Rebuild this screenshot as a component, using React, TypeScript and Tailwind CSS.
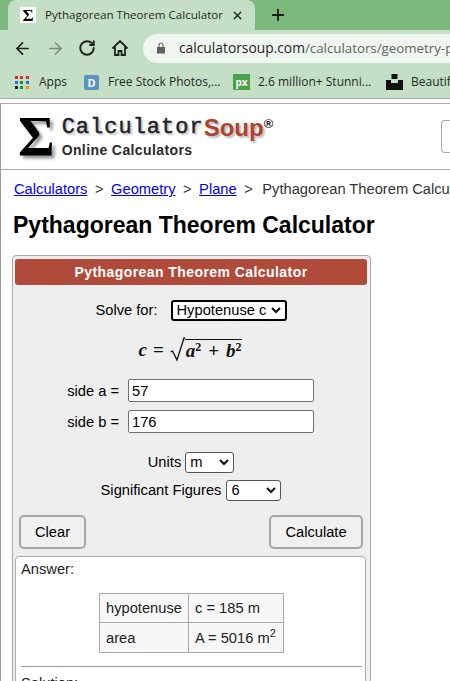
import { ArrowLeft, ArrowRight, Plus, RotateCw, X } from "lucide-react";

const sans = "font-['Liberation_Sans',Arial,sans-serif]";
const uiFont = "font-['Open_Sans','Noto_Sans',sans-serif]";

const appDots = [
  "bg-[#d93025]", "bg-[#d93025]", "bg-[#d93025]",
  "bg-[#1a73e8]", "bg-[#1e8e3e]", "bg-[#1a73e8]",
  "bg-[#202124]", "bg-[#1e8e3e]", "bg-[#f29900]",
];

function Bookmark({ icon, label, className }: { icon: React.ReactNode; label: string; className: string }) {
  return (
    <div className={`flex shrink-0 items-center ${className}`}>
      {icon}
      <span className="whitespace-nowrap text-[12px] text-[#1c2a1f]">{label}</span>
    </div>
  );
}

function BrowserChrome() {
  return (
    <div className={`${uiFont} shrink-0`}>
      <div className="flex h-[30px] items-end bg-[#7ab87c]">
        <div className="ml-[8px] flex h-[30px] w-[247px] items-center rounded-t-[8px] bg-[#c5dfc6] pl-[12px]">
          <div className="flex h-[16px] w-[16px] items-center justify-center bg-white font-['Liberation_Serif',serif] text-[17px] font-bold leading-none text-black">Σ</div>
          <span className="ml-[9px] whitespace-nowrap text-[11.6px] text-[#1f2a21]">Pythagorean Theorem Calculator</span>
          <X className="ml-[8px] shrink-0 text-[#1f2a21]" size={13} strokeWidth={2.5} />
        </div>
        <Plus className="mb-[6px] ml-[14px] text-[#1a1a1a]" size={18} strokeWidth={2.4} />
      </div>
      <div className="flex h-[36px] items-center bg-[#c5dfc6] pl-[13px]">
        <ArrowLeft className="shrink-0 text-[#1f2321]" size={19} strokeWidth={2.2} />
        <ArrowRight className="ml-[14px] shrink-0 text-[#7f8a80]" size={19} strokeWidth={2} />
        <RotateCw className="ml-[13px] shrink-0 text-[#1f2321]" size={18} strokeWidth={2.6} />
        <svg className="ml-[15px] shrink-0" width="18" height="18" viewBox="0 0 18 18" fill="none" stroke="#1f2321" strokeWidth="1.8">
          <path d="M1.5 9.5 9 2l7.5 7.5M4 8v8h3.5v-4h3v4H14V8" />
        </svg>
        <div className="ml-[14px] flex h-[29px] min-w-0 flex-1 items-center overflow-hidden rounded-l-full bg-[#eff6ef] pl-[13px]">
          <svg className="shrink-0" width="10" height="12" viewBox="0 0 10 12" fill="#5a625b">
            <path d="M1 5h8v6.5H1zM2.5 5V3a2.5 2.5 0 0 1 5 0v2H6.4V3a1.4 1.4 0 0 0-2.8 0v2z" />
          </svg>
          <span className="ml-[13px] whitespace-nowrap text-[13.8px] text-[#1f2321]">calculatorsoup.com<span className="text-[13.3px] text-[#5c665e]">/calculators/geometry-p</span></span>
        </div>
      </div>
      <div className="flex h-[32px] items-center overflow-hidden bg-[#c5dfc6] pl-[15px]">
        <Bookmark
          className="w-[69px]"
          icon={
            <div className="mr-[10px] grid w-[14px] grid-cols-3 gap-[2px]">
              {appDots.map((dot, i) => (
                <span key={i} className={`h-[3px] w-[3px] ${dot}`} />
              ))}
            </div>
          }
          label="Apps"
        />
        <Bookmark
          className="w-[149px]"
          icon={<div className="mr-[9px] flex h-[15px] w-[15px] items-center justify-center rounded-[2px] bg-[#5a93bd] text-[11px] font-bold leading-none text-white">D</div>}
          label="Free Stock Photos,..."
        />
        <Bookmark
          className="w-[153px]"
          icon={<div className="mr-[8px] flex h-[16px] w-[17px] items-center justify-center bg-[#4aa34a] text-[10px] font-bold leading-none text-white">px</div>}
          label="2.6 million+ Stunni..."
        />
        <Bookmark
          className=""
          icon={
            <svg className="mr-[8px]" width="17" height="16" viewBox="0 0 17 16" fill="#111">
              <path d="M5.5 0h6v5h-6zM0 6h5v3h7V6h5v10H0z" />
            </svg>
          }
          label="Beautiful"
        />
      </div>
      <div className="h-[5px] border-t border-[#a9b3aa] bg-white" />
    </div>
  );
}

function SiteHeader() {
  return (
    <div className="flex h-[67px] shrink-0 items-center border-y border-[#a8a8a8] bg-white pl-[17px]">
      <div className="font-['Liberation_Serif',serif] text-[56px] font-bold leading-none text-black [text-shadow:3px_3px_3px_#999]">Σ</div>
      <div className="ml-[7px]">
        <div className="flex items-start leading-none">
          <span className="font-['Liberation_Mono',monospace] text-[22px] tracking-[1px] text-[#222] [-webkit-text-stroke:0.5px_#222] [text-shadow:2px_2px_2px_#bbb]">Calculator</span>
          <span className={`${sans} -mt-[1px] text-[24px] font-bold text-[#b0432f] [text-shadow:2px_2px_2px_#bbb]`}>Soup</span>
          <span className={`${sans} text-[13px] font-bold text-[#222]`}>®</span>
        </div>
        <div className={`${sans} mt-[3px] text-[14px] font-bold leading-none tracking-[0.4px] text-[#2a2a2a]`}>Online Calculators</div>
      </div>
      <div className="ml-auto h-[33px] w-[9px] rounded-l-[4px] border-y border-l border-[#aaa]" />
    </div>
  );
}

function Breadcrumbs() {
  const links = ["Calculators", "Geometry", "Plane"];
  return (
    <div className="mt-[11px] flex whitespace-nowrap pl-[13px] text-[14.7px] leading-[16px] text-[#333]">
      {links.map((link) => (
        <span key={link} className="flex">
          <a href="#" className="text-[#0000ee] underline">{link}</a>
          <span className="mx-[7.5px]">&gt;</span>
        </span>
      ))}
      <span className="ml-[2px]">Pythagorean Theorem Calculator</span>
    </div>
  );
}

function NativeSelect({ value, className }: { value: string; className: string }) {
  return (
    <div className={`flex items-center justify-between rounded-[3px] border border-[#555] bg-white pl-[4px] pr-[4px] text-[14.7px] leading-none text-black ${className}`}>
      <span>{value}</span>
      <svg width="10" height="7" viewBox="0 0 10 7" fill="none" stroke="#111" strokeWidth="2">
        <path d="M1 1l4 4 4-4" />
      </svg>
    </div>
  );
}

function SideInput({ label, value }: { label: string; value: string }) {
  return (
    <div className="flex items-center">
      <span className="w-[113px] pr-[9px] text-right text-[14.7px] text-black">{label}</span>
      <div className="flex h-[23px] w-[186px] items-center rounded-[2px] border border-[#707070] bg-white pl-[3px] text-[14.7px] text-black">{value}</div>
    </div>
  );
}

function Formula() {
  return (
    <div className="mt-[15px] flex h-[26px] items-center justify-center pr-[2px] font-['Liberation_Serif',serif] text-[19px] font-bold leading-none text-[#111]">
      <i>c</i>
      <span className="mx-[6px]">=</span>
      <svg className="shrink-0" width="15" height="25" viewBox="0 0 15 25" fill="none" stroke="#111">
        <path d="M0.5 15l2-1 4.5 9L14 1h1" strokeWidth="1.3" />
      </svg>
      <span className="border-t border-[#111] pl-[1px] pt-[1px]">
        <i>a</i><sup className="text-[12px]">2</sup>
        <span className="mx-[7px]">+</span>
        <i>b</i><sup className="text-[12px]">2</sup>
      </span>
    </div>
  );
}

function AnswerBox() {
  const cell = "border border-[#a8a8a8] px-[6px] text-left align-middle";
  return (
    <div className="mr-[1px] mt-[7px] h-[140px] rounded-[4px] border border-[#aaa] bg-white pl-[5px] pr-[3px] pt-[4px] text-[14.7px] leading-[16px] text-[#222]">
      <div>Answer:</div>
      <table className="mx-auto mt-[16px] border-collapse bg-[#f7f7f7]">
        <tbody>
          <tr className="h-[29px]">
            <td className={cell}>hypotenuse</td>
            <td className={`${cell} w-[95px]`}>c = 185 m</td>
          </tr>
          <tr className="h-[30px]">
            <td className={cell}>area</td>
            <td className={cell}>A = 5016 m<sup className="text-[11px]">2</sup></td>
          </tr>
        </tbody>
      </table>
      <div className="mt-[13px] border-t border-[#999]" />
      <div className="mt-[8px]">Solution:</div>
    </div>
  );
}

function CalculatorCard() {
  return (
    <div className="ml-[11px] mt-[16px] w-[359px] rounded-t-[4px] border border-[#a8a8a8] bg-[#eeeeee] pl-[2px] pr-[3px] pt-[3px]">
      <div className="flex h-[26px] items-center justify-center rounded-[3px] bg-[#b04a3a] text-[14px] font-bold tracking-[0.43px] text-white">Pythagorean Theorem Calculator</div>
      <div className="mt-[14px] flex items-center justify-center text-[14.7px] text-black">
        <span>Solve for:</span>
        <NativeSelect value="Hypotenuse c" className="ml-[13px] h-[21px] w-[116px] border-2 border-black" />
      </div>
      <Formula />
      <div className="mt-[17px] flex flex-col gap-[8px]">
        <SideInput label="side a =" value="57" />
        <SideInput label="side b =" value="176" />
      </div>
      <div className="mt-[18px] flex items-center justify-center text-[14.7px] text-black">
        <span className="mr-[4px]">Units</span>
        <NativeSelect value="m" className="h-[21px] w-[49px]" />
      </div>
      <div className="mt-[6px] flex items-center justify-center text-[14.7px] text-black">
        <span className="mr-[5px]">Significant Figures</span>
        <NativeSelect value="6" className="h-[21px] w-[55px]" />
      </div>
      <div className="mt-[14px] flex justify-between px-[4px]">
        <button className="h-[34px] w-[67px] rounded-[5px] border-2 border-[#a6a6a6] bg-[#f0f0f0] pb-[1px] text-[14.7px] text-black">Clear</button>
        <button className="h-[34px] w-[94px] rounded-[5px] border-2 border-[#a6a6a6] bg-[#f0f0f0] pb-[1px] text-[14.7px] text-black">Calculate</button>
      </div>
      <AnswerBox />
    </div>
  );
}

export default function App() {
  return (
    <div className={`${sans} flex h-[681px] w-[450px] flex-col overflow-hidden bg-white`}>
      <BrowserChrome />
      <div className="min-h-0 flex-1 overflow-hidden border-l border-[#999]">
        <SiteHeader />
        <Breadcrumbs />
        <h1 className="mt-[15px] pl-[12px] text-[23px] font-bold leading-[27px] text-black">Pythagorean Theorem Calculator</h1>
        <CalculatorCard />
      </div>
    </div>
  );
}
